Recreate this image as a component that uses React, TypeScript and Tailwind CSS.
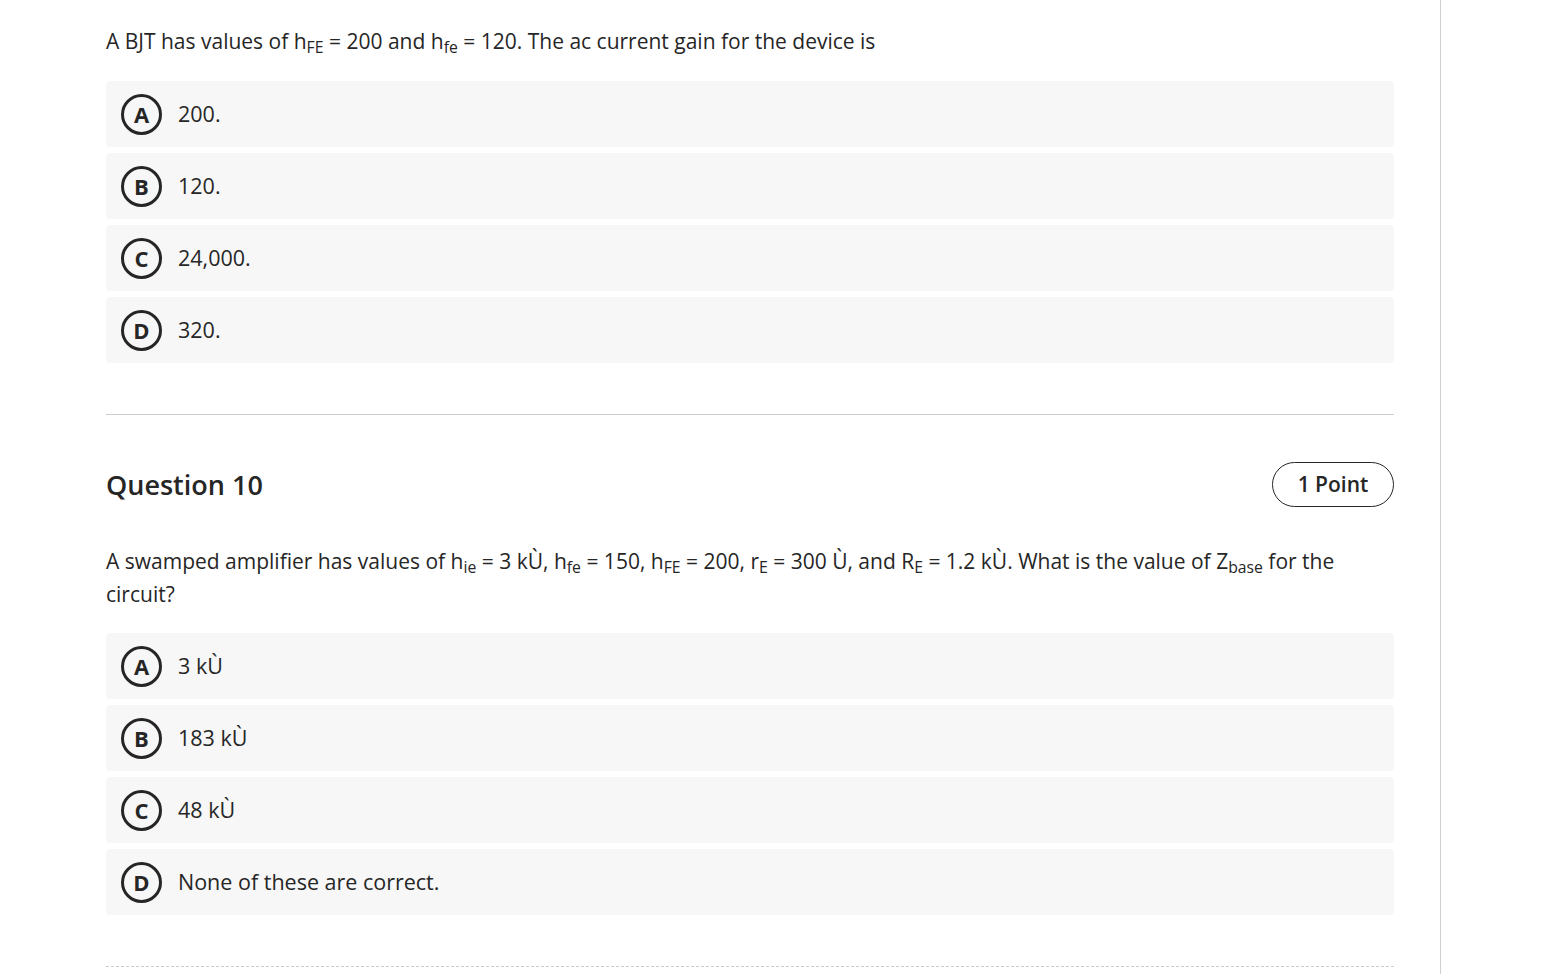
import React from "react";

const font = { fontFamily: '"Open Sans", "Noto Sans", sans-serif' };

function Option({ letter, children }: { letter: string; children: React.ReactNode }) {
  return (
    <div className="flex h-[66px] items-center rounded-[4px] bg-[#f7f7f7] pl-[15px]">
      <div className="flex h-[41px] w-[41px] items-center justify-center rounded-full border-[3px] border-[#262626] text-[22px] font-bold text-[#262626]">
        {letter}
      </div>
      <div className="ml-[16px] text-[21.5px] text-[#262626]">{children}</div>
    </div>
  );
}

export default function App() {
  return (
    <div className="min-h-[974px] bg-white" style={font}>
      <div className="min-h-[974px] w-[1441px] border-r border-[#cfcfcf] pl-[106px] pr-[46px] pt-[25px] text-[#262626]">
        <p className="text-[21px] leading-[33px]">
          A BJT has values of h<sub>FE</sub> = 200 and h<sub>fe</sub> = 120. The ac current gain for the device is
        </p>
        <div className="mt-[23px] flex flex-col gap-[6px]">
          <Option letter="A">200.</Option>
          <Option letter="B">120.</Option>
          <Option letter="C">24,000.</Option>
          <Option letter="D">320.</Option>
        </div>
        <div className="mt-[51px] border-t border-[#cccccc]" />
        <div className="mt-[47px] flex h-[45px] items-center justify-between">
          <h2 className="pt-[1px] text-[27px] font-semibold">Question 10</h2>
          <div className="flex h-[45px] w-[122px] items-center justify-center rounded-full border border-[#262626] text-[21px] font-semibold">
            1 Point
          </div>
        </div>
        <p className="mt-[38px] text-[21px] leading-[33px]">
          A swamped amplifier has values of h<sub>ie</sub> = 3 kÙ, h<sub>fe</sub> = 150, h<sub>FE</sub> = 200, r
          <sub>E</sub> = 300 Ù, and R<sub>E</sub> = 1.2 kÙ. What is the value of Z<sub>base</sub> for the circuit?
        </p>
        <div className="mt-[22px] flex flex-col gap-[6px]">
          <Option letter="A">3 kÙ</Option>
          <Option letter="B">183 kÙ</Option>
          <Option letter="C">48 kÙ</Option>
          <Option letter="D">None of these are correct.</Option>
        </div>
        <div className="mt-[51px] border-t border-dashed border-[#cccccc]" />
      </div>
    </div>
  );
}
